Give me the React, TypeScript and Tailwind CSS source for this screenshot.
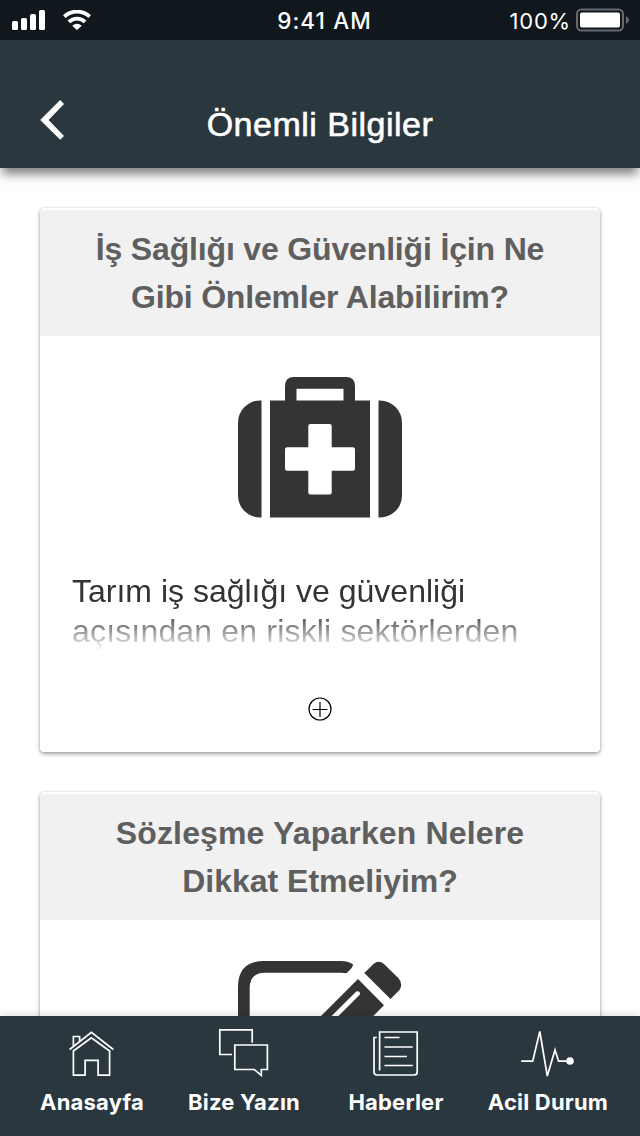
import type { ReactNode } from "react";

function StatusBar() {
  return (
    <div className="grid h-10 shrink-0 grid-cols-3 items-center bg-[#10171d] pr-[11px] pl-3 font-['Inter','Roboto',sans-serif] text-[22px] leading-none text-white">
      <div className="flex items-center gap-[18px]">
        <svg width="33" height="20" viewBox="0 0 33 20" fill="white">
          <rect x="0" y="11" width="6" height="9" rx="1.5" />
          <rect x="9" y="8" width="6" height="12" rx="1.5" />
          <rect x="18" y="4" width="6" height="16" rx="1.5" />
          <rect x="27" y="0" width="6" height="20" rx="1.5" />
        </svg>
        <svg width="28" height="20" viewBox="0 0 28 20" fill="none" stroke="white">
          <path d="M1.3 6.6C8.4-.1 19.6-.1 26.7 6.6" strokeWidth="3.8" />
          <path d="M5.9 11.9C10.4 7.4 17.6 7.4 22.1 11.9" strokeWidth="3.8" />
          <path d="M9.2 15.8Q14 11.6 18.8 15.8L14 20Z" fill="white" stroke="none" />
        </svg>
      </div>
      <div className="pt-[2px] pl-[8px] text-center text-[22.5px] font-medium whitespace-nowrap tracking-[1.1px]">9:41 AM</div>
      <div className="flex items-center justify-end gap-[5px]">
        <span className="pt-px tracking-[0.8px]">100%</span>
        <svg width="53" height="24" viewBox="0 0 53 24">
          <rect x="1" y="1.5" width="46" height="21" rx="4.5" fill="none" stroke="#646a6e" strokeWidth="2" />
          <rect x="4" y="4.5" width="40" height="15" rx="2" fill="white" />
          <path d="M50 8q3 1.5 3 4t-3 4z" fill="#646a6e" />
        </svg>
      </div>
    </div>
  );
}

function Header() {
  return (
    <header className="z-10 flex h-32 shrink-0 items-center bg-[#2b373f] pt-8 shadow-[0_8px_10px_-2px_rgba(30,24,30,0.56)]">
      <button className="flex w-[104px] justify-center" aria-label="Geri">
        <svg width="24" height="40" viewBox="0 0 24 40" fill="white">
          <path d="M.2 19.9 20.2 0 24 3.9 8.6 19.9 24 35.9 20.2 39.8Z" />
        </svg>
      </button>
      <h1 className="mt-[8px] flex-1 pr-[104px] text-center text-[34px] leading-[48px] tracking-[0.5px] whitespace-nowrap text-white [-webkit-text-stroke:0.6px_white]">
        Önemli Bilgiler
      </h1>
    </header>
  );
}

function MedkitIcon() {
  return (
    <svg width="164" height="141" viewBox="238 377 164 141" fill="#343434">
      <path d="M261.5 400.5V517.5H260A22 22 0 0 1 238 495.5V422.5A22 22 0 0 1 260 400.5Z" />
      <path d="M378.5 400.5V517.5H380A22 22 0 0 0 402 495.5V422.5A22 22 0 0 0 380 400.5Z" />
      <path
        fillRule="evenodd"
        d="M270 400.5H285V386Q285 377 294 377H346Q355 377 355 386V400.5H370V517.5H270ZM296.5 388.7V400.5H343.5V388.7ZM310.3 424Q308.3 424 308.3 426V447.3H287Q285 447.3 285 449.3V468.7Q285 470.7 287 470.7H308.3V492.5Q308.3 494.5 310.3 494.5H329.7Q331.7 494.5 331.7 492.5V470.7H353Q355 470.7 355 468.7V449.3Q355 447.3 353 447.3H331.7V426Q331.7 424 329.7 424Z"
      />
    </svg>
  );
}

function WriteIcon() {
  return (
    <svg width="164" height="141" viewBox="238 961 164 141" fill="#343434">
      <path d="M238 987Q238 961 264 961H341Q349 961 353 964.5Q353.5 967 346.5 973.3Q344 973 341 972.7H265Q249.7 972.7 249.7 988V1076Q249.7 1090 264 1090H352V1102H264Q238 1102 238 1076Z" />
      <path d="M364.3 973 373.5 964Q378.5 959.5 384 964L398.5 978.3Q403.5 984 399.5 990L390.5 999Z" />
      <path fillRule="evenodd" d="M358 979 384 1005.2 329 1060H303V1034ZM356.2 991.4 316 1031.5Q315.5 1035.5 319.5 1035L359.7 994.8Q361 990.5 356.2 991.4Z" />
    </svg>
  );
}

function PlusCircle() {
  return (
    <svg width="24" height="24" viewBox="0 0 24 24" fill="none" stroke="black" strokeWidth="1.2">
      <circle cx="12" cy="12" r="11" />
      <path d="M4.5 12.5H19.5M12 5V20" />
    </svg>
  );
}

function Card({ title, icon, children }: { title: ReactNode; icon: ReactNode; children?: ReactNode }) {
  return (
    <article className="h-[544px] shrink-0 overflow-hidden rounded-[4px] bg-white pt-[2px] shadow-[0_2px_4px_rgba(0,0,0,0.36),0_0_2px_rgba(0,0,0,0.15)]">
      <h2 className="h-[126px] bg-[#f1f1f1] pt-[15px] text-center text-[32px] leading-[48px] font-bold whitespace-nowrap text-[#5f5f5f]">
        {title}
      </h2>
      <div className="flex flex-col items-center">
        <div className="mt-[41px] h-[141px]">{icon}</div>
        <div className="mt-[53px] h-20 w-full overflow-hidden px-8 text-[32px] leading-10 whitespace-nowrap text-[#333] [mask-image:linear-gradient(to_bottom,black_50%,transparent)]">
          {children}
        </div>
        <button className="mt-[46px]" aria-label="Devamını göster">
          <PlusCircle />
        </button>
      </div>
    </article>
  );
}

function Tab({ label, children }: { label: string; children: ReactNode }) {
  return (
    <div className="flex w-[152px] flex-col items-center">
      <svg width="56" height="50" viewBox="0 0 56 50" fill="none" stroke="white" strokeWidth="1.7">
        {children}
      </svg>
      <span className="mt-[10px] text-[22px] leading-7 font-bold tracking-[0.2px] whitespace-nowrap">{label}</span>
    </div>
  );
}

function TabBar() {
  return (
    <nav className="z-10 flex h-[120px] shrink-0 bg-[#2b373f] px-4 pt-3 font-['Inter','Roboto',sans-serif] text-white shadow-[0_-2px_8px_rgba(0,0,0,0.12)]">
      <Tab label="Anasayfa">
        <path d="M5.6 21.5 27.4 4.3 49.3 21.5M9.4 18V8.5H15.6V13.5M9.4 23V47.2H21.1V32.3H34.1V47.2H45.6V23L27.4 9.7Z" />
      </Tab>
      <Tab label="Bize Yazın">
        <path d="M36.2 14.8V1.8H3.8V26.5H16M18.8 17H51.4V41.5H45.3V47.5L38.3 41.5H18.8Z" />
      </Tab>
      <Tab label="Haberler">
        <path d="M11.6 42.5V4H49.2V44Q49.2 47 46.2 47H9Q6 47 6 44V9.5H8.8M16.5 9.5H31.5M16.5 19H44.8M16.5 28.5H39M16.5 37.5H44.8" />
      </Tab>
      <Tab label="Acil Durum">
        <path d="M1.2 33.2H12.7L19.8 3.5 27.3 48 35 22 38.6 33.2H50" />
        <circle cx="50" cy="33" r="3.8" fill="white" stroke="none" />
      </Tab>
    </nav>
  );
}

export default function App() {
  return (
    <div className="flex h-[1136px] w-[640px] flex-col overflow-hidden bg-white font-['Liberation_Sans',Arial,sans-serif]">
      <StatusBar />
      <Header />
      <main className="flex min-h-0 flex-1 flex-col gap-10 overflow-hidden px-10 pt-10">
        <Card
          title={
            <>
              <span className="block tracking-[-0.16px]">İş Sağlığı ve Güvenliği İçin Ne</span>
              <span className="block tracking-[-0.2px]">Gibi Önlemler Alabilirim?</span>
            </>
          }
          icon={<MedkitIcon />}
        >
          <p>Tarım iş sağlığı ve güvenliği</p>
          <p className="tracking-[0.17px]">açısından en riskli sektörlerden</p>
        </Card>
        <Card
          title={
            <>
              <span className="block tracking-[0.14px]">Sözleşme Yaparken Nelere</span>
              <span className="block">Dikkat Etmeliyim?</span>
            </>
          }
          icon={<WriteIcon />}
        />
      </main>
      <TabBar />
    </div>
  );
}
